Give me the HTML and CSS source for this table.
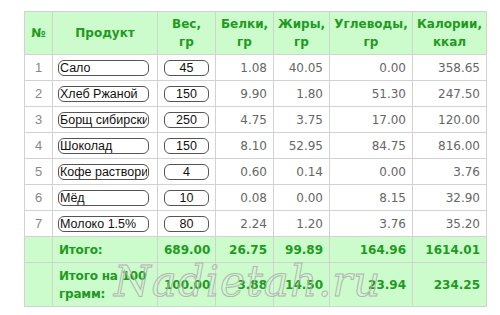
FILE: index.html
```html
<!DOCTYPE html>
<html>
<head>
<meta charset="utf-8">
<link rel="stylesheet" href="styles.css">
</head>
<body>
<div class="wrap">
<table class="calc">
  <colgroup>
    <col class="c-num"><col class="c-prod"><col class="c-w"><col class="c-b"><col class="c-f"><col class="c-u"><col class="c-k">
  </colgroup>
  <thead>
    <tr><th>№</th><th>Продукт</th><th>Вес,<br>гр</th><th>Белки,<br>гр</th><th>Жиры,<br>гр</th><th>Углеводы,<br>гр</th><th>Калории,<br>ккал</th></tr>
  </thead>
  <tbody>
    <tr><td class="n">1</td><td class="p"><input class="in-name" value="Сало"></td><td class="w"><input class="in-w" value="45"></td><td>1.08</td><td>40.05</td><td>0.00</td><td>358.65</td></tr>
    <tr><td class="n">2</td><td class="p"><input class="in-name" value="Хлеб Ржаной"></td><td class="w"><input class="in-w" value="150"></td><td>9.90</td><td>1.80</td><td>51.30</td><td>247.50</td></tr>
    <tr><td class="n">3</td><td class="p"><input class="in-name" value="Борщ сибирский"></td><td class="w"><input class="in-w" value="250"></td><td>4.75</td><td>3.75</td><td>17.00</td><td>120.00</td></tr>
    <tr><td class="n">4</td><td class="p"><input class="in-name" value="Шоколад"></td><td class="w"><input class="in-w" value="150"></td><td>8.10</td><td>52.95</td><td>84.75</td><td>816.00</td></tr>
    <tr><td class="n">5</td><td class="p"><input class="in-name" value="Кофе растворимый"></td><td class="w"><input class="in-w" value="4"></td><td>0.60</td><td>0.14</td><td>0.00</td><td>3.76</td></tr>
    <tr><td class="n">6</td><td class="p"><input class="in-name" value="Мёд"></td><td class="w"><input class="in-w" value="10"></td><td>0.08</td><td>0.00</td><td>8.15</td><td>32.90</td></tr>
    <tr><td class="n">7</td><td class="p"><input class="in-name" value="Молоко 1.5%"></td><td class="w"><input class="in-w" value="80"></td><td>2.24</td><td>1.20</td><td>3.76</td><td>35.20</td></tr>
  </tbody>
  <tfoot>
    <tr class="tot"><td></td><td class="lbl">Итого:</td><td>689.00</td><td>26.75</td><td>99.89</td><td>164.96</td><td>1614.01</td></tr>
    <tr class="tot tall"><td></td><td class="lbl">Итого на 100<br>грамм:</td><td>100.00</td><td>3.88</td><td>14.50</td><td>23.94</td><td>234.25</td></tr>
  </tfoot>
</table>
<div class="mark">Nadietah.ru</div>
</div>
</body>
</html>
```
FILE: styles.css
```css
html, body { margin: 0; padding: 0; background: #fff; }
body { font-family: "DejaVu Sans", Verdana, sans-serif; font-size: 12px; color: #666; }
.wrap { position: relative; padding: 11px 0 0 24px; }
.calc { border-collapse: collapse; width: 463px; table-layout: fixed; }
.c-num { width: 28px; } .c-prod { width: 105px; } .c-w { width: 58px; } .c-b { width: 58px; }
.c-f { width: 56px; } .c-u { width: 83px; } .c-k { width: 74px; }
.calc th, .calc td { border: 1px solid #d2d2d2; padding: 0 6px; }
.calc th { background: #ccfbcc; color: #1e9a1e; font-weight: bold; height: 42px; line-height: 18px; text-align: center; padding: 0 2px; }
.calc td { height: 25px; text-align: right; line-height: 18px; }
.calc td.n { text-align: center; color: #888; padding: 0; font-family: "Liberation Sans", Arial, sans-serif; font-size: 13px; }
.calc td.p { padding: 0 0 0 5px; text-align: left; }
.calc td.w { padding: 0; text-align: center; }
input { box-sizing: border-box; height: 16px; border: 1px solid #555; border-radius: 6px; font-family: "Liberation Sans", Arial, sans-serif; font-size: 12.5px; color: #111; padding: 0 1px; background: #fff; outline: none; vertical-align: middle; margin: 0; }
.in-name { width: 91px; }
.in-w { width: 45px; text-align: center; }
.tot td { background: #ccfbcc; color: #1e9a1e; font-weight: bold; font-size: 12px; }
.tot td.lbl { text-align: left; padding: 0 0 0 6px; white-space: nowrap; letter-spacing: -0.2px; }
.tot.tall td { height: 43px; }
.mark { position: absolute; left: 114px; top: 257px; font-family: "DejaVu Serif", serif; font-style: italic; font-size: 42px; color: transparent; -webkit-text-stroke: 1px #b4b4b4; letter-spacing: 1px; pointer-events: none; }
```
